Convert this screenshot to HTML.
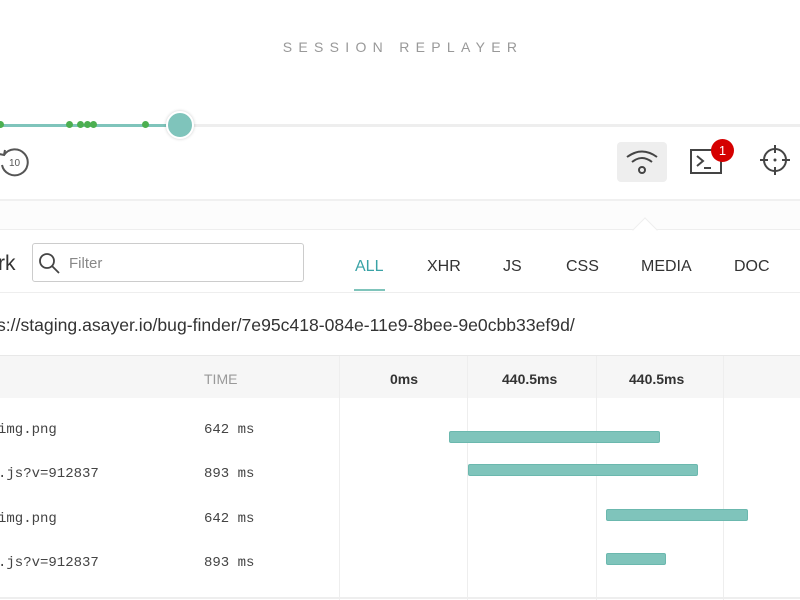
<!DOCTYPE html>
<html><head><style>
*{margin:0;padding:0;box-sizing:border-box}
body{width:800px;height:600px;overflow:hidden;background:#fff;font-family:"Liberation Sans",sans-serif;position:relative;color:#333}
.a{position:absolute}
.mono{font-family:"Liberation Mono",monospace;font-size:14px;color:#444}
.bar{position:absolute;background:#7fc4bb;border:1px solid #6bb8ae;border-radius:2px;height:12px}
.tab{position:absolute;top:258px;font-size:16px;color:#333}
</style></head><body>
<div class="a" style="top:39px;left:0;width:806px;text-align:center;font-size:14px;letter-spacing:6.3px;color:#999">SESSION REPLAYER</div>
<div class="a" style="top:124px;left:0;width:800px;height:3px;background:#eee"></div>
<div class="a" style="top:124px;left:0;width:172px;height:3px;background:#7fc4bb"></div>
<div class="a" style="top:121px;left:-3px;width:7px;height:7px;border-radius:50%;background:#4caf50"></div>
<div class="a" style="top:121px;left:66px;width:7px;height:7px;border-radius:50%;background:#4caf50"></div>
<div class="a" style="top:121px;left:77px;width:7px;height:7px;border-radius:50%;background:#4caf50"></div>
<div class="a" style="top:121px;left:84px;width:7px;height:7px;border-radius:50%;background:#4caf50"></div>
<div class="a" style="top:121px;left:90px;width:7px;height:7px;border-radius:50%;background:#4caf50"></div>
<div class="a" style="top:121px;left:142px;width:7px;height:7px;border-radius:50%;background:#4caf50"></div>
<div class="a" style="top:111px;left:166px;width:28px;height:28px;border-radius:50%;background:#7fc4bb;border:2px solid #fff;box-shadow:0 0 3px rgba(0,0,0,.2)"></div>
<svg class="a" style="left:-4px;top:145px" width="34" height="32" viewBox="0 0 34 32"><path d="M8 10 A13 13 0 1 1 6 20" fill="none" stroke="#555" stroke-width="2"/><path d="M3 9 L8 10 L9 5" fill="none" stroke="#555" stroke-width="2"/><text x="13" y="21" font-size="10" fill="#555" font-family="Liberation Sans">10</text></svg>
<div class="a" style="left:617px;top:142px;width:50px;height:40px;background:#eee;border-radius:4px"></div>
<svg class="a" style="left:622px;top:145px" width="40" height="34" viewBox="0 0 40 34"><path d="M5 12 Q20 1 35 12" fill="none" stroke="#444" stroke-width="2"/><path d="M10 17 Q20 9 30 17" fill="none" stroke="#444" stroke-width="2"/><circle cx="20" cy="25" r="3" fill="none" stroke="#444" stroke-width="2"/></svg>
<svg class="a" style="left:689px;top:148px" width="34" height="28" viewBox="0 0 34 28"><rect x="2" y="2" width="30" height="23" fill="none" stroke="#444" stroke-width="2"/><path d="M8 8 L14 13 L8 18 M15 20 H22" fill="none" stroke="#444" stroke-width="2"/></svg>
<div class="a" style="left:711px;top:139px;width:23px;height:23px;border-radius:50%;background:#d50000;color:#fff;font-size:13px;text-align:center;line-height:23px">1</div>
<svg class="a" style="left:759px;top:144px" width="32" height="32" viewBox="0 0 32 32"><circle cx="16" cy="16" r="11" fill="none" stroke="#444" stroke-width="2"/><path d="M16 1V9M16 23V31M1 16H9M23 16H31" stroke="#444" stroke-width="2"/><circle cx="16" cy="16" r="1.5" fill="#444"/></svg>
<div class="a" style="top:199px;left:0;width:800px;height:2px;background:#f0f0f0"></div>
<div class="a" style="top:201px;left:0;width:800px;height:28px;background:#fcfcfc"></div>
<div class="a" style="top:229px;left:0;width:800px;height:1px;background:#eee"></div>
<div class="a" style="top:221px;left:636px;width:18px;height:18px;background:#fff;transform:rotate(45deg);border-left:1px solid #eee;border-top:1px solid #eee"></div>
<div class="a" style="left:-2px;top:252px;font-size:21px;color:#333">rk</div>
<div class="a" style="left:32px;top:243px;width:272px;height:39px;border:1px solid #ccc;border-radius:3px"></div>
<svg class="a" style="left:38px;top:252px" width="24" height="24" viewBox="0 0 24 24"><circle cx="9" cy="9" r="7" fill="none" stroke="#444" stroke-width="1.8"/><path d="M14 14 L21 21" stroke="#444" stroke-width="1.8"/></svg>
<div class="a" style="left:69px;top:255px;font-size:15px;color:#888">Filter</div>
<div class="tab" style="left:355px;color:#3aa3a6">ALL</div>
<div class="a" style="left:354px;top:289px;width:31px;height:2px;background:#7fc4bb"></div>
<div class="tab" style="left:427px">XHR</div>
<div class="tab" style="left:503px">JS</div>
<div class="tab" style="left:566px">CSS</div>
<div class="tab" style="left:641px">MEDIA</div>
<div class="tab" style="left:734px">DOC</div>
<div class="a" style="top:292px;left:0;width:800px;height:1px;background:#eee"></div>
<div class="a" style="left:-3px;top:315px;font-size:17.6px;color:#333">s://staging.asayer.io/bug-finder/7e95c418-084e-11e9-8bee-9e0cbb33ef9d/</div>
<div class="a" style="top:355px;left:0;width:800px;height:1px;background:#e8e8e8"></div>
<div class="a" style="top:356px;left:0;width:800px;height:42px;background:#f6f6f6"></div>
<div class="a" style="left:204px;top:371px;font-size:14px;color:#999">TIME</div>
<div class="a" style="left:390px;top:371px;font-size:14px;color:#333;font-weight:bold">0ms</div>
<div class="a" style="left:502px;top:371px;font-size:14px;color:#333;font-weight:bold">440.5ms</div>
<div class="a" style="left:629px;top:371px;font-size:14px;color:#333;font-weight:bold">440.5ms</div>
<div class="a" style="top:356px;left:339px;width:1px;height:244px;background:#eee"></div>
<div class="a" style="top:356px;left:467px;width:1px;height:244px;background:#eee"></div>
<div class="a" style="top:356px;left:596px;width:1px;height:244px;background:#eee"></div>
<div class="a" style="top:356px;left:723px;width:1px;height:244px;background:#eee"></div>
<div class="a mono" style="left:-2px;top:422px">img.png</div><div class="a mono" style="left:204px;top:422px">642 ms</div>
<div class="a mono" style="left:-2px;top:466px">.js?v=912837</div><div class="a mono" style="left:204px;top:466px">893 ms</div>
<div class="a mono" style="left:-2px;top:511px">img.png</div><div class="a mono" style="left:204px;top:511px">642 ms</div>
<div class="a mono" style="left:-2px;top:555px">.js?v=912837</div><div class="a mono" style="left:204px;top:555px">893 ms</div>
<div class="bar" style="left:449px;top:431px;width:211px"></div>
<div class="bar" style="left:468px;top:464px;width:230px"></div>
<div class="bar" style="left:606px;top:509px;width:142px"></div>
<div class="bar" style="left:606px;top:553px;width:60px"></div>
<div class="a" style="top:597px;left:0;width:800px;height:2px;background:#eee"></div>
</body></html>
